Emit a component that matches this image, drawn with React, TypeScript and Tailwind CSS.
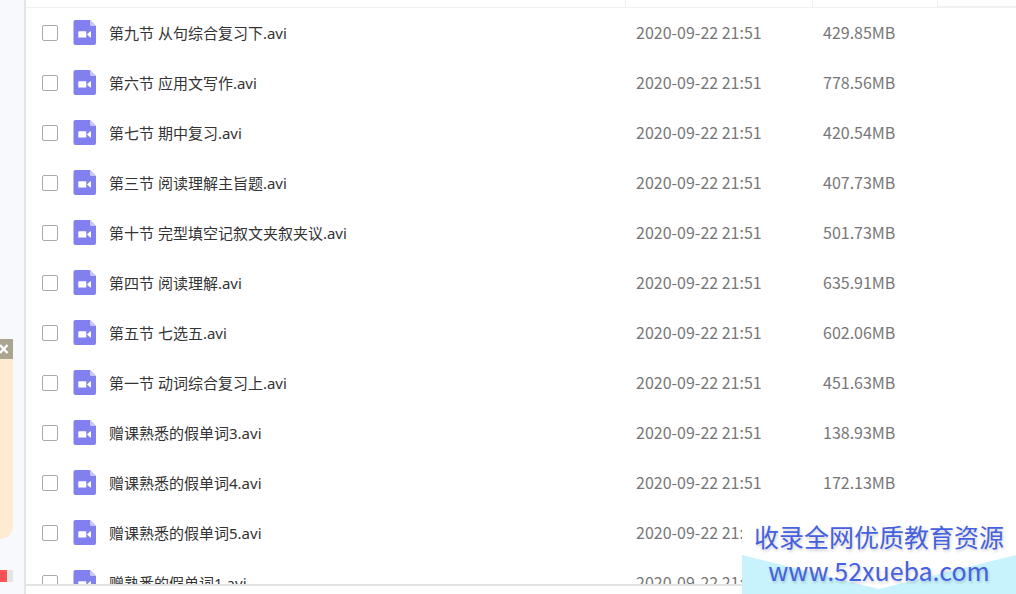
import React from "react";

interface VideoFile {
  name: string;
  modified: string;
  size: string;
}

const MODIFIED = "2020-09-22 21:51";

const FILES: VideoFile[] = [
  { name: "第九节 从句综合复习下.avi", modified: MODIFIED, size: "429.85MB" },
  { name: "第六节 应用文写作.avi", modified: MODIFIED, size: "778.56MB" },
  { name: "第七节 期中复习.avi", modified: MODIFIED, size: "420.54MB" },
  { name: "第三节 阅读理解主旨题.avi", modified: MODIFIED, size: "407.73MB" },
  { name: "第十节 完型填空记叙文夹叙夹议.avi", modified: MODIFIED, size: "501.73MB" },
  { name: "第四节 阅读理解.avi", modified: MODIFIED, size: "635.91MB" },
  { name: "第五节 七选五.avi", modified: MODIFIED, size: "602.06MB" },
  { name: "第一节 动词综合复习上.avi", modified: MODIFIED, size: "451.63MB" },
  { name: "赠课熟悉的假单词3.avi", modified: MODIFIED, size: "138.93MB" },
  { name: "赠课熟悉的假单词4.avi", modified: MODIFIED, size: "172.13MB" },
  { name: "赠课熟悉的假单词5.avi", modified: MODIFIED, size: "" },
  { name: "赠熟悉的假单词1.avi", modified: MODIFIED, size: "" },
];

const VideoIcon: React.FC = () => (
  <svg width="24" height="26" viewBox="0 0 24 26" className="shrink-0" aria-hidden="true">
    <path
      d="M2.5 0H17L23 6V23a2 2 0 0 1-2 2H2.5A2 2 0 0 1 0.5 23V2A2 2 0 0 1 2.5 0Z"
      fill="#8280ee"
    />
    <path d="M17 0L23 6H18.5a1.5 1.5 0 0 1-1.5-1.5Z" fill="#c9c8fa" />
    <rect x="5.3" y="11.3" width="8" height="6.2" rx="0.6" fill="#fff" />
    <path d="M14 14.4L17 11.5Q18 10.9 18 11.9V16.9Q18 17.9 17 17.3Z" fill="#fff" />
  </svg>
);

const Sidebar: React.FC = () => (
  <aside className="relative w-6 shrink-0 overflow-hidden bg-[#f7f9fc]">
    <div className="absolute top-[339px] left-0 h-[200px] w-[13px] overflow-hidden rounded-br-2xl bg-[#ffebd2]">
      <button
        aria-label="关闭"
        className="flex h-5 w-full items-center bg-[#aaa491]"
      >
        <svg width="9" height="10" viewBox="0 0 9 10" aria-hidden="true">
          <path d="M0 1L7.5 9M7.5 1L0 9" stroke="#fff" strokeWidth="2.4" />
        </svg>
      </button>
    </div>
    <div className="absolute top-[570px] left-0 h-3 w-[13px] border-r-6 border-[#dfe5e3] bg-[#fc5254]" />
  </aside>
);

const FileRow: React.FC<{ file: VideoFile }> = ({ file }) => (
  <tr className="h-[50px]">
    <td className="p-0 pl-4">
      <label className="flex items-center">
        <input
          type="checkbox"
          className="size-4 shrink-0 appearance-none rounded-xs border border-[#aaaaaa] bg-white"
        />
        <span className="ml-[15px] flex items-center">
          <VideoIcon />
          <span className="ml-3 truncate font-['Noto_Sans','Noto_Sans_CJK_SC',sans-serif] text-[15px] leading-6 text-[#333]">
            {file.name}
          </span>
        </span>
      </label>
    </td>
    <td className="p-0 pb-0.5 pl-[10px]">{file.modified}</td>
    <td className="p-0 pb-0.5 pl-[10px]">{file.size}</td>
    <td className="p-0" />
  </tr>
);

const Watermark: React.FC = () => (
  <div className="absolute right-0 bottom-0 w-[274px] bg-white">
    <svg
      className="absolute bottom-0 left-0 h-[39px] w-full"
      viewBox="0 0 274 39"
      preserveAspectRatio="none"
      aria-hidden="true"
    >
      <path d="M0 0L137 34L274 0V39H0Z" fill="#c8f3fd" />
    </svg>
    <div className="relative flex flex-col items-center pb-2 text-[#4560e0] text-shadow-[1px_2px_3px_rgba(0,0,0,0.18)]">
      <span className="text-[25px] leading-9">收录全网优质教育资源</span>
      <a href="http://www.52xueba.com" className="text-[25px] leading-8">
        www.52xueba.com
      </a>
    </div>
  </div>
);

export default function App() {
  return (
    <div className="relative flex h-screen overflow-hidden bg-white font-['Noto_Sans_CJK_SC',sans-serif]">
      <Sidebar />
      <main className="flex min-w-0 flex-1 flex-col border-l-2 border-[#e1e4e9]">
        <div className="min-h-0 flex-1 overflow-hidden border-b-2 border-[#e2e3e5]">
          <table className="w-full table-fixed border-separate border-spacing-0 text-base leading-6 text-[#777]">
            <colgroup>
              <col />
              <col className="w-[187px]" />
              <col className="w-[125px]" />
              <col className="w-[78px]" />
            </colgroup>
            <thead>
              <tr className="h-2">
                <th aria-label="文件名" className="border-r border-b border-[#f0f0f2] p-0" />
                <th aria-label="修改时间" className="border-r border-b border-[#f0f0f2] p-0" />
                <th aria-label="大小" className="border-r border-b border-[#f0f0f2] p-0" />
                <th aria-label="操作" className="border-b-2 border-[#f0f0f2] p-0" />
              </tr>
            </thead>
            <tbody>
              {FILES.map((file) => (
                <FileRow key={file.name} file={file} />
              ))}
            </tbody>
          </table>
        </div>
        <footer className="h-2 shrink-0" />
      </main>
      <Watermark />
    </div>
  );
}
